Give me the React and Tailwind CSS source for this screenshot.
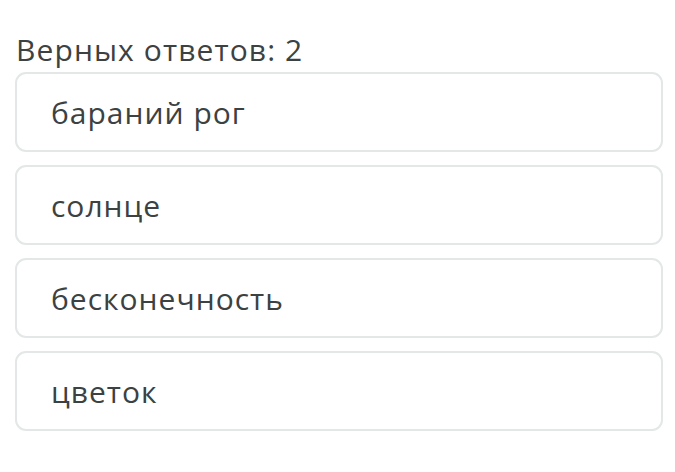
export default function App() {
  const items = ["бараний рог", "солнце", "бесконечность", "цветок"];
  return (
    <div className="w-[675px] h-[472px] bg-white pt-[30px] pl-[15px] pr-[12px]" style={{ fontFamily: '"Open Sans", sans-serif' }}>
      <div className="text-[30px] leading-[40px] text-[#3c4142] pl-[1px] tracking-[1.1px]">Верных ответов: 2</div>
      <div className="flex flex-col gap-[13px] mt-[2px]">
        {items.map((t) => (
          <div key={t} className="h-[80px] rounded-[11px] border-2 border-[#e3e7e7] flex items-center pl-[34px] text-[30px] tracking-[1px] text-[#3c4142]">
            {t}
          </div>
        ))}
      </div>
    </div>
  );
}
